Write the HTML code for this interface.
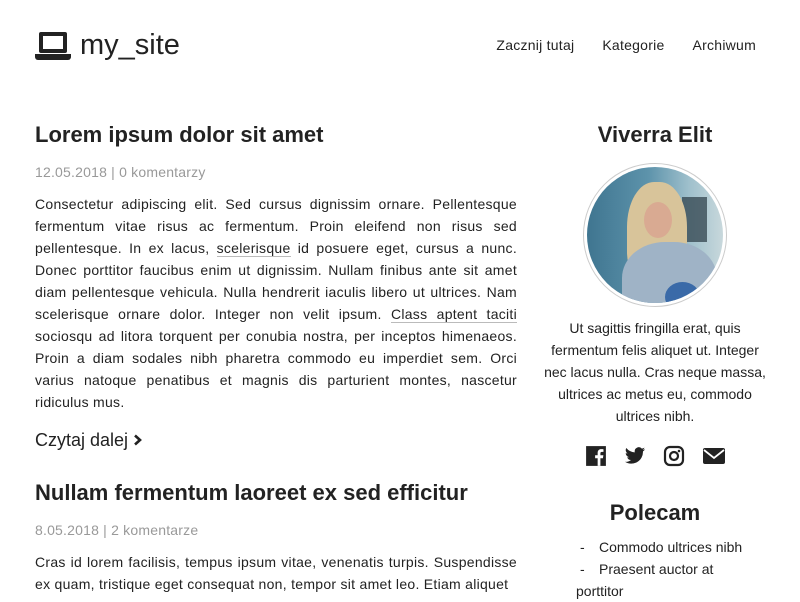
<!DOCTYPE html>
<html><head><meta charset="utf-8"><style>
*{margin:0;padding:0;box-sizing:border-box}
body{width:800px;height:600px;overflow:hidden;background:#fff;font-family:"Liberation Sans",sans-serif;color:#222;position:relative}
.logo{position:absolute;left:35px;top:29px;display:flex;align-items:center}
.logo span{font-size:29px;margin-left:9px;color:#222}
nav{position:absolute;top:37px;right:44px;font-size:14px;letter-spacing:.25px}
nav a{margin-left:28px;color:#222;text-decoration:none}
.main{position:absolute;left:35px;top:121px;width:482px}
h2{font-size:22px;font-weight:bold;line-height:28px}
.meta{color:#999;font-size:14px;margin-top:15px;letter-spacing:.2px}
p{font-size:14px;line-height:22px;text-align:justify;margin-top:13px;letter-spacing:.28px}
u{text-decoration:none;border-bottom:1px solid #bbb}
.more{font-size:18px;margin-top:17px;margin-bottom:28px}
.side{position:absolute;left:540px;top:121px;width:230px;text-align:center}
.side h3{font-size:22px;font-weight:bold;line-height:28px}
.photo{width:144px;height:144px;border-radius:50%;border:1px solid #ccc;margin:14px auto 0;padding:3px}
.ph{width:100%;height:100%;border-radius:50%;position:relative;overflow:hidden;background:linear-gradient(90deg,#3f7590 0%,#5d93ab 45%,#9fc0cc 75%,#c8d8dc 100%)}
.ph div{position:absolute}
.side p{text-align:center;margin-top:10px;letter-spacing:0}
.icons{margin-top:18px;display:flex;justify-content:center;gap:17px}
ul{list-style:none;text-align:left;font-size:14px;line-height:22px;margin-top:9px;padding-left:36px;padding-right:22px}
li{text-indent:4px}
li span{display:inline-block;width:19px;text-indent:0}
</style></head><body>
<div class="logo"><svg width="36" height="30" viewBox="0 0 36 30"><rect x="4" y="1" width="28" height="21" rx="2" fill="#222"/><rect x="8" y="5" width="20" height="13" fill="#fff"/><path d="M0 23h36v3a3 3 0 0 1-3 3H3a3 3 0 0 1-3-3z" fill="#222"/></svg><span>my_site</span></div>
<nav><a>Zacznij tutaj</a><a>Kategorie</a><a>Archiwum</a></nav>
<div class="main">
<h2>Lorem ipsum dolor sit amet</h2>
<div class="meta">12.05.2018 | 0 komentarzy</div>
<p>Consectetur adipiscing elit. Sed cursus dignissim ornare. Pellentesque fermentum vitae risus ac fermentum. Proin eleifend non risus sed pellentesque. In ex lacus, <u>scelerisque</u> id posuere eget, cursus a nunc. Donec porttitor faucibus enim ut dignissim. Nullam finibus ante sit amet diam pellentesque vehicula. Nulla hendrerit iaculis libero ut ultrices. Nam scelerisque ornare dolor. Integer non velit ipsum. <u>Class aptent taciti</u> sociosqu ad litora torquent per conubia nostra, per inceptos himenaeos. Proin a diam sodales nibh pharetra commodo eu imperdiet sem. Orci varius natoque penatibus et magnis dis parturient montes, nascetur ridiculus mus.</p>
<div class="more">Czytaj dalej <svg width="10" height="12" viewBox="0 0 10 12"><path d="M2 1.5l5 4.5-5 4.5" fill="none" stroke="#222" stroke-width="2.6"/></svg></div>
<h2>Nullam fermentum laoreet ex sed efficitur</h2>
<div class="meta">8.05.2018 | 2 komentarze</div>
<p>Cras id lorem facilisis, tempus ipsum vitae, venenatis turpis. Suspendisse ex quam, tristique eget consequat non, tempor sit amet leo. Etiam aliquet</p>
</div>
<div class="side">
<h3>Viverra Elit</h3>
<div class="photo"><div class="ph">
<div style="left:95px;top:30px;width:25px;height:45px;background:#2a3a44;opacity:.7"></div>
<div style="left:40px;top:15px;width:60px;height:100px;border-radius:45% 45% 30% 30%;background:#d8c49a"></div>
<div style="left:57px;top:35px;width:28px;height:36px;border-radius:50%;background:#d9aa92"></div>
<div style="left:35px;top:75px;width:95px;height:80px;border-radius:45% 45% 10% 10%;background:#9fb3c6"></div>
<div style="left:78px;top:115px;width:35px;height:30px;border-radius:50%;background:#3a6aa8"></div>
</div></div>
<p>Ut sagittis fringilla erat, quis fermentum felis aliquet ut. Integer nec lacus nulla. Cras neque massa, ultrices ac metus eu, commodo ultrices nibh.</p>
<div class="icons">
<svg width="22" height="22" viewBox="0 0 20 20"><rect x="1" y="1" width="18" height="18" fill="#222"/><path d="M14 19v-7h2.3l.4-2.7H14V7.6c0-.8.3-1.3 1.4-1.3h1.4V3.9c-.3 0-1.1-.1-2-.1-2 0-3.3 1.2-3.3 3.4v2.1H9.2V12h2.3v7z" fill="#fff"/></svg>
<svg width="22" height="22" viewBox="0 0 24 24"><path d="M23 4.6a9 9 0 0 1-2.6.7 4.5 4.5 0 0 0 2-2.5 9 9 0 0 1-2.9 1.1A4.5 4.5 0 0 0 11.8 8 12.8 12.8 0 0 1 2.5 3.3a4.5 4.5 0 0 0 1.4 6 4.5 4.5 0 0 1-2-.6 4.5 4.5 0 0 0 3.6 4.5 4.5 4.5 0 0 1-2 .1 4.5 4.5 0 0 0 4.2 3.1A9 9 0 0 1 1 18.3a12.8 12.8 0 0 0 19.7-11.3A9 9 0 0 0 23 4.6z" fill="#222"/></svg>
<svg width="22" height="22" viewBox="0 0 22 22"><rect x="2" y="2" width="18" height="18" rx="5" fill="none" stroke="#222" stroke-width="2.2"/><circle cx="11" cy="11" r="4" fill="none" stroke="#222" stroke-width="2.2"/><circle cx="16" cy="6" r="1.3" fill="#222"/></svg>
<svg width="24" height="22" viewBox="0 0 24 22"><rect x="1" y="3" width="22" height="16" rx="2" fill="#222"/><path d="M2 5l10 8 10-8" fill="none" stroke="#fff" stroke-width="1.8"/></svg>
</div>
<h3 style="margin-top:32px">Polecam</h3>
<ul><li><span>-</span>Commodo ultrices nibh</li><li><span>-</span>Praesent auctor at porttitor</li></ul>
</div>
</body></html>
